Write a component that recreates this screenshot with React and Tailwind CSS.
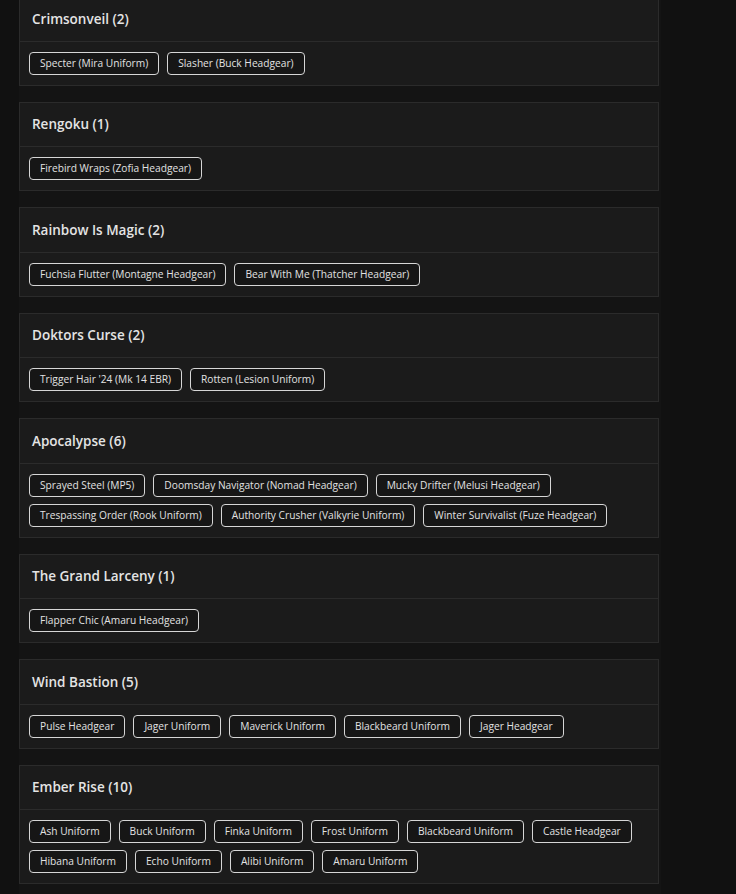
const bundles = [
  { name: "Crimsonveil", items: ["Specter (Mira Uniform)", "Slasher (Buck Headgear)"] },
  { name: "Rengoku", items: ["Firebird Wraps (Zofia Headgear)"] },
  { name: "Rainbow Is Magic", items: ["Fuchsia Flutter (Montagne Headgear)", "Bear With Me (Thatcher Headgear)"] },
  { name: "Doktors Curse", items: ["Trigger Hair '24 (Mk 14 EBR)", "Rotten (Lesion Uniform)"] },
  {
    name: "Apocalypse",
    items: [
      "Sprayed Steel (MP5)",
      "Doomsday Navigator (Nomad Headgear)",
      "Mucky Drifter (Melusi Headgear)",
      "Trespassing Order (Rook Uniform)",
      "Authority Crusher (Valkyrie Uniform)",
      "Winter Survivalist (Fuze Headgear)",
    ],
  },
  { name: "The Grand Larceny", items: ["Flapper Chic (Amaru Headgear)"] },
  {
    name: "Wind Bastion",
    items: ["Pulse Headgear", "Jager Uniform", "Maverick Uniform", "Blackbeard Uniform", "Jager Headgear"],
  },
  {
    name: "Ember Rise",
    items: [
      "Ash Uniform",
      "Buck Uniform",
      "Finka Uniform",
      "Frost Uniform",
      "Blackbeard Uniform",
      "Castle Headgear",
      "Hibana Uniform",
      "Echo Uniform",
      "Alibi Uniform",
      "Amaru Uniform",
    ],
  },
];

function BundleCard({ name, items }) {
  return (
    <section className="border border-[#2b2b2b] bg-[#1b1b1b]">
      <header className="border-b border-[#2b2b2b] px-3 pt-[11.5px] pb-[11px]">
        <h2 className="text-[13.5px] leading-[21px] font-semibold text-[#e4e4e4]">
          {name} ({items.length})
        </h2>
      </header>
      <div className="flex flex-wrap gap-x-[8px] gap-y-[7px] px-[9px] pt-[10px] pb-[10px]">
        {items.map((item) => (
          <span
            key={item}
            className="h-[23px] rounded-[4px] border border-[#d6d6d6] bg-[#161616] px-[10px] text-[10.2px] leading-[21px] text-[#e2e2e2] whitespace-nowrap"
          >
            {item}
          </span>
        ))}
      </div>
    </section>
  );
}

export default function App() {
  return (
    <div className="min-h-screen bg-[#111111] pl-[19px]" style={{ fontFamily: '"Open Sans", "Noto Sans", sans-serif' }}>
      <div className="w-[642px] bg-[#141414]">
        <div className="-mt-[4px] flex w-[640px] flex-col gap-[16px] pb-[10px]">
          {bundles.map((b) => (
            <BundleCard key={b.name} name={b.name} items={b.items} />
          ))}
        </div>
      </div>
    </div>
  );
}
